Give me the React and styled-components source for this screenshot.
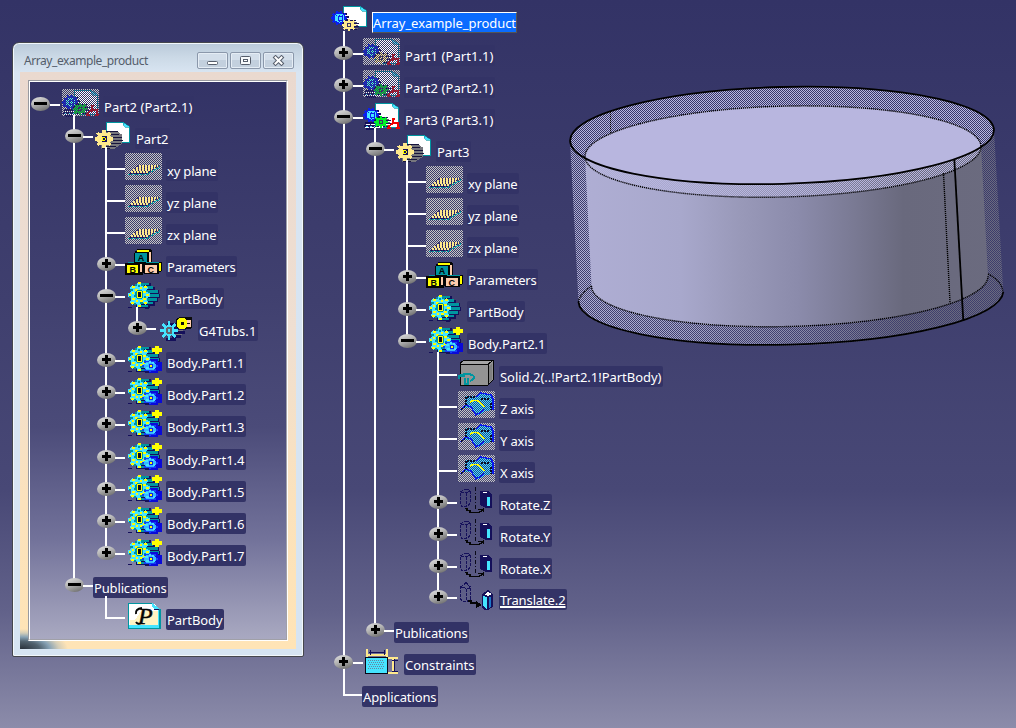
import React from 'react';
import styled, { createGlobalStyle, css } from 'styled-components';

const GlobalStyle = createGlobalStyle`
  html, body { margin: 0; padding: 0; }
  body { width: 1016px; height: 728px; overflow: hidden; }
`;

const FONT = '"Noto Sans", "Open Sans", sans-serif';
const NAVY = '#15105a';
const TEAL = '#0095a0';
const CYAN = '#45e4ff';
const YELLOW = '#ffff00';
const CREAM = '#ffe98c';

const measurer = document.createElement('canvas').getContext('2d');

/* letter spacing that makes a text take the given width */
function trackingFor(text, size, width) {
  measurer.font = `${size}px ${FONT}`;
  return (width - measurer.measureText(text).width) / text.length;
}

/* ---------- page ---------- */

const Desktop = styled.main`
  width: 1016px;
  height: 728px;
  display: flex;
  align-items: flex-start;
  overflow: hidden;
  font-family: ${FONT};
  background: linear-gradient(#333366 0, #3f3f6e 300px, #484876 490px, #62628a 612px, #8c8caa 728px);
`;

/* ---------- floating window ---------- */

const WindowFrame = styled.section`
  box-sizing: border-box;
  flex: none;
  width: 292px;
  height: 615px;
  margin: 42px 27px 0 12px;
  padding: 0 6px 6px;
  border: 1px solid #45474d;
  border-radius: 7px 7px 2px 2px;
  box-shadow: inset 0 0 0 1px #f2f7fb;
  background: linear-gradient(#b9c9d9 0, #cbd9e6 14px, #d9e5f2 30px, #d6e4f2 100%);
`;

const TitleBar = styled.header`
  display: flex;
  align-items: flex-start;
  height: 29px;
  padding: 0 1px 0 5px;
  box-sizing: border-box;
`;

const Title = styled.h1`
  flex: 1;
  margin: 9px 0 0;
  font-size: 12px;
  font-weight: 400;
  line-height: 18px;
  letter-spacing: ${(p) => p.$tracking}px;
  white-space: nowrap;
  color: #545d6b;
`;

const WindowButton = styled.button`
  box-sizing: border-box;
  width: 31px;
  height: 17px;
  margin: 9px 2px 0 0;
  padding: 0;
  border: 1px solid #8b98ab;
  border-radius: 2px;
  box-shadow: inset 0 0 0 1px #e5edf5;
  background: linear-gradient(#d3deea 0 50%, #c3d0de 50% 100%);
  svg { display: block; margin: 0 auto; }
`;

const Client = styled.div`
  box-sizing: border-box;
  width: 276px;
  height: 577px;
  margin-left: 1px;
  padding: 8px;
  background:
    radial-gradient(ellipse 46px 20px at 2px 100%, #2a323c 0, #51626f 38%, #87a2b5 60%, #d3cdb8 80%, transparent 100%),
    linear-gradient(#ead9cf 0, #efdfd2 45%, #fbe2bc 75%, #ffe4b6 100%);
`;

const Sunken = styled.div`
  box-sizing: border-box;
  width: 260px;
  height: 561px;
  border: 1px solid;
  border-color: #989aa0 #fff #fff #989aa0;
`;

const Pane = styled.div`
  box-sizing: border-box;
  width: 258px;
  height: 559px;
  padding: 6px 0 0 1px;
  border: 1px solid;
  border-color: #fff #a0a0a8 #a0a0a8 #fff;
  background: linear-gradient(#333366 0, #40406f 38%, #4b4b79 62%, #72729a 82%, #a9a9c1 100%);
`;

/* ---------- tree ---------- */

const ProductTree = styled.div`
  flex: none;
  width: 235px;
  box-sizing: border-box;
  padding: 4px 0 0 3px;
`;

const Row = styled.div`
  position: relative;
  display: flex;
  height: ${(p) => p.$height}px;
`;

const Guide = styled.span`
  flex: none;
  width: ${(p) => p.$width}px;
  ${(p) => p.$on && css`background: linear-gradient(#fff, #fff) 9px 0 / 2px 100% no-repeat;`}
`;

const Joint = styled.span`
  flex: none;
  width: 19px;
  padding: 9px 0 0 ${(p) => (p.$nested ? 1 : 0)}px;
  box-sizing: border-box;
  background: linear-gradient(#fff, #fff) 9px 0 / 2px ${(p) => (p.$line === 'end' ? '18px' : '100%')} no-repeat;
  ${(p) => p.$line === 'none' && css`background: none;`}
  svg { display: block; }
`;

const Stub = styled.span`
  flex: none;
  width: ${(p) => p.$width}px;
  height: 2px;
  margin-top: 16px;
  background: #fff;
  ${(p) => p.$long && css`margin-left: -9px; padding-left: 9px;`}
`;

const IconBox = styled.span`
  flex: none;
  width: 37px;
  height: 28px;
  margin: 1px 4px 0 ${(p) => p.$gap || 0}px;
  svg { display: block; overflow: visible; }
`;

const Label = styled.span`
  flex: none;
  box-sizing: border-box;
  height: 21px;
  width: ${(p) => p.$width}px;
  margin-top: 8px;
  padding-left: 1px;
  border-radius: 2px;
  font-size: 13px;
  line-height: 23px;
  letter-spacing: ${(p) => p.$tracking}px;
  white-space: nowrap;
  color: #fff;
  background: #333366;
  ${(p) => p.$bare && css`margin-left: -1px;`}
  ${(p) => p.$underlined && css`
    line-height: 22px;
    text-decoration: underline;
    text-decoration-thickness: 2px;
    text-underline-offset: 1px;
  `}
  ${(p) => p.$selected && css`
    border: 1px solid;
    border-color: #fff #555 #555 #fff;
    border-radius: 0;
    line-height: 21px;
    padding-left: 0;
    background: #0a6bff;
  `}
`;

const RootRow = styled(Row)`
  margin-left: -3px;
`;

/* start of a child line, drawn over the parent's icon or label */
const Drop = styled.i`
  position: absolute;
  left: ${(p) => p.$x}px;
  top: 27px;
  bottom: 0;
  width: 2px;
  background: #fff;
`;

/* ---------- icons ---------- */

const Dithered = styled.svg`
  mask-image: repeating-conic-gradient(#000 0 25%, transparent 0 50%);
  mask-size: 2px 2px;
`;

function gearPath(cx, cy, rx, ry, teeth = 8, depth = 0.78) {
  const pts = [];
  for (let i = 0; i < teeth; i += 1) {
    [-0.32, -0.2, 0.2, 0.32].forEach((o, k) => {
      const a = ((i + o) / teeth) * Math.PI * 2;
      const f = k === 0 || k === 3 ? depth : 1;
      pts.push(`${(cx + rx * f * Math.cos(a)).toFixed(1)},${(cy + ry * f * Math.sin(a)).toFixed(1)}`);
    });
  }
  return `M${pts.join('L')}Z`;
}

const Crisp = ({ as: Tag = 'svg', children }) => (
  <Tag width="37" height="28" viewBox="0 0 37 28" shapeRendering="crispEdges">{children}</Tag>
);

const Page = ({ h = 21 }) => (
  <g>
    <path d={`M12 1h17l7 5v${h - 5}h-24z`} fill="#fff" />
    <path d={`M12.5 ${h}V1.5H29M35.5 6V${h + 0.5}H20`} fill="none" stroke={TEAL} strokeWidth="1.4" />
    <path d="M29 1l7 5h-5l-2-2z" fill={CYAN} stroke={TEAL} strokeWidth=".6" />
  </g>
);

const BlueGear = () => (
  <g>
    <path d="M8 8.500h8M10 11.500h8M10 14.500h8M8 17.500h8" stroke={NAVY} strokeWidth="2" />
    <path d={gearPath(8, 13, 8, 7, 10, 0.85)} fill="#0a1ff0" />
    <ellipse cx="8.500" cy="13" rx="5" ry="4.500" fill={CYAN} />
    <path d="M5 10h7M5 16h7" stroke="#0a1ff0" strokeDasharray="1 2" />
    <path d="M7 11h4v4H7z" fill="none" stroke="#0a1ff0" />
  </g>
);

const SideGear = ({ fill }) => (
  <g>
    <path d="M18 15.500h7M20 18.500h8M20 21.500h8M20 24.500h6" stroke={NAVY} strokeWidth="1.6" />
    <path d="M20 17h6M21 20h6M20 23h7" stroke="#666" strokeWidth="1" />
    <path d={gearPath(18, 20, 7, 6, 8, 0.75)} fill={fill} />
    <rect x="16" y="18" width="4" height="4" fill="#3a3466" />
    <rect x="17" y="19" width="2" height="2" fill={fill} />
  </g>
);

const Instance = ({ second, base }) => (
  <g>
    <Page h={25} />
    <BlueGear />
    {base && (
      <g>
        <path d="M2 21h10M1 24h15M3 27h10" stroke={NAVY} strokeWidth="2" />
        <path d="M3 22.5h9M2 25.5h11" stroke="#fff" strokeWidth="1.6" strokeDasharray="4 1" />
        <path d="M3 24h9" stroke={CYAN} strokeDasharray="2 2" />
      </g>
    )}
    <SideGear fill={second} />
    <path d="M30 17v4l-5 4M30 21h5v5M24 26h4M33 26h4M29 17h3" fill="none" stroke="#f20000" strokeWidth="2" />
  </g>
);

const Gear3D = () => (
  <g>
    <path d="M12 3.500h14M16 7.500h14M17 11h17M17 15h18M17 19h16M15 23h15M11 25.500h14" stroke={NAVY} strokeWidth="3.600" />
    <path d="M12 3h12M15 6.500h13M17 10.500h16M17 14.500h17M17 18.500h15M15 22h13M12 25h11" stroke={TEAL} strokeWidth="2.400" />
    <g transform="translate(1 0)">
      <ellipse cx="13" cy="14" rx="9" ry="10" fill={CYAN} />
      <path d={gearPath(13, 14, 11.5, 12.5, 8, 0.76)} fill={CYAN} />
      <path d="M12 2h3M6 6h3M18 6h3M9 9h3M6 12h2M17 11h3M3 14h2M20 14h3M6 18h3M17 18h3M10 20h2M5 22h3M18 22h3M12 25h3M14 7h2M14 20h3" stroke={YELLOW} strokeWidth="2" />
      <path d="M15 4h3M4 9h3M9 4h2M20 10h3M3 16h2M14 22h3M8 23h2M21 18h2M8 15h2M18 16h2M12 5h2" stroke={TEAL} strokeWidth="2" />
      <path d="M11 9h4l2 2v5l-2 2h-4l-2-2v-5z" fill={TEAL} />
      <path d="M11 10h4l1 1v5l-1 1h-4z" fill={YELLOW} />
      <rect x="12" y="11" width="3" height="5" fill="#0a0a20" />
    </g>
    <path d="M3 26.500h4M20 27h4" stroke={NAVY} strokeWidth="1.500" />
  </g>
);

const Glyph = styled.text`
  font: bold 9px "Liberation Sans", sans-serif;
  fill: #050505;
`;

const Script = styled.text`
  font: italic 24px "Liberation Serif", serif;
  fill: #050505;
  stroke: #050505;
  stroke-width: 0.5px;
`;

const icons = {
  root: () => <Crisp><Page /><BlueGear /><SideGear fill={CREAM} /></Crisp>,
  part1: () => <Crisp as={Dithered}><path d="M0 0h37v27H0z" fill="#c4c4c4" /><Instance second={CREAM} /></Crisp>,
  part2: () => <Crisp as={Dithered}><path d="M0 0h37v27H0z" fill="#c4c4c4" /><Instance second="#00f028" base /></Crisp>,
  part3: () => <Crisp><Instance second="#00f028" base /></Crisp>,
  part: () => (
    <Crisp>
      <Page />
      <path d="M8 9.500h13l7 4v9l-7 5H7z" fill="#77777d" />
      <path d="M10 10.500h14M13 13.500h12M15 16.500h13M15 19.500h14M15 22.500h12M11 25.500h11M8 27.500h8" stroke="#17143c" strokeWidth="1.7" />
      <path d={gearPath(10, 18, 9.5, 9, 8, 0.76)} fill={CREAM} />
      <path d="M8 15h4l1 1v4l-1 1H8z" fill={NAVY} />
      <path d="M8 16h3l1 2-1 2H8z" fill={YELLOW} />
      <rect x="9" y="17" width="2" height="2" fill={NAVY} />
    </Crisp>
  ),
  plane: () => (
    <Crisp>
      <foreignObject width="37" height="28">
        <Crisp as={Dithered}>
          <path d="M0 0h37v27H0z" fill="#c6c6c4" />
        </Crisp>
      </foreignObject>
      <path d="M12 12h23l-12 9H3z" fill={NAVY} fillOpacity=".7" />
      <path d="M14 13h19M11 15h19M8 17h19M6 19h18" stroke={CREAM} strokeWidth="2" strokeDasharray="2 1" />
      <path d="M3 21.500h19l13-7.500" fill="none" stroke={TEAL} strokeWidth="1.500" strokeDasharray="2 1" />
      <path d="M5 20.500h18" stroke={NAVY} strokeDasharray="2 1" />
    </Crisp>
  ),
  parameters: () => (
    <Crisp>
      <path d="M12 0h14v1h1v12h10v9h-1v1h-2v2H19v-1h-1v2H0V14h3v-1h6V4h1V2h2z" fill="#050505" />
      <path d="M12 1h12v2H12z" fill={YELLOW} />
      <path d="M10 4h12v9H10z" fill={TEAL} />
      <path d="M24 3h2v10h-2z" fill="#ffccad" />
      <path d="M3 13h6v1H3zM21 13h13v1H21z" fill={TEAL} />
      <path d="M2 16h11v8H2z" fill={YELLOW} />
      <path d="M15 15h2v8h-2z" fill="#ffccad" />
      <path d="M20 16h12v8H20z" fill="#ffccad" />
      <path d="M34 14h2v8h-2z" fill={YELLOW} />
      <Glyph x="12.800" y="12">A</Glyph>
      <Glyph x="4.500" y="23.500">B</Glyph>
      <Glyph x="22.500" y="23.500">C</Glyph>
    </Crisp>
  ),
  gear: () => <Crisp><Gear3D /></Crisp>,
  body: () => (
    <Crisp>
      <Gear3D />
      <path d="M30 1h4v2h3v4h-3v2h-4V7h-3V3h3z" fill={YELLOW} />
      <path d="M25 15.500h8M28 18.500h9M28 21.500h9M28 24.500h9M24 27h9" stroke="#0a0ad8" strokeWidth="2.200" />
      <path d={gearPath(25, 21, 8, 6.5)} fill="#1540f4" />
      <ellipse cx="25" cy="21" rx="6" ry="4.500" fill="#37b8ff" />
      <path d="M20 19h3M21 23h3M27 18h2M28 23h2M24 17h2" stroke={CYAN} strokeWidth="2" />
      <path d="M24 19h4v4h-4z" fill="#1023e8" />
      <rect x="25" y="20" width="2" height="2" fill={YELLOW} />
    </Crisp>
  ),
  tubs: () => (
    <Crisp>
      <path d="M10 11.500h10M15 15.500h14M16 19.500h12M15 23.500h9M9 26.500h10" stroke={NAVY} strokeWidth="2.400" />
      <path d="M16 11.500h5M18 17.500h8M18 21.500h7" stroke="#75757d" strokeWidth="1.800" />
      <path d={gearPath(12, 17.5, 9, 9.5, 8, 0.6)} fill={CYAN} />
      <path d="M10 14h4l1 1v5l-1 1h-4l-1-1v-5z" fill="#65656d" />
      <rect x="11" y="16" width="2" height="3" fill={CYAN} />
      <path d="M23 4h11l1 1v10l-2 1h-9l-5-2V6z" fill="#0c0c0c" />
      <path d="M30 7h4v7h-4z" fill="#ffccad" />
      <path d="M22 5h6l2 3v5l-2 3h-6l-2-3V8z" fill={YELLOW} />
      <path d="M24 9h3v3h-3z" fill="#0c0c0c" />
      <path d="M30 10.500h3" stroke="#0c0c0c" />
    </Crisp>
  ),
  publication: () => (
    <Crisp>
      <path d="M4 2h25l5 5v18H4z" fill="#fff" />
      <path d="M16 9h17v14H5v-5h5z" fill="#fff0b4" fillOpacity=".8" />
      <path d="M4 24.500h30V8" fill="none" stroke={CYAN} strokeWidth="3" />
      <path d="M3.500 26V1.500h24M3 26.500h32V7" fill="none" stroke={TEAL} strokeWidth="1.200" />
      <path d="M27 1l8 6h-6l-2-3z" fill={CYAN} />
      <path d="M29 7.500h5" stroke={NAVY} strokeWidth="1.500" />
      <Script x="13" y="22">P</Script>
      <path d="M11 12q-1-5 6-6M11 20q2 3 5 1" fill="none" stroke="#050505" strokeWidth="2" shapeRendering="auto" />
    </Crisp>
  ),
  solid: () => (
    <Crisp>
      <path d="M2 4l5-3h28v20l-5 5H2z" fill="#949494" stroke="#050505" strokeWidth="1" />
      <path d="M3 4l4-2.500h27L30 5H3z" fill="#a5a5a5" />
      <path d="M2.500 5.500h27.500l4.500-4M30.500 5.500v20" fill="none" stroke="#050505" strokeWidth="1" />
      <path d="M31 7l3-3v16l-3 4z" fill="#808080" />
      <path d="M1 20v-3q3-2 9-2 7 1 6 4-1 2-4 3M1 17h6M7 19v6h3v-6" fill="none" stroke={TEAL} strokeWidth="2" />
    </Crisp>
  ),
  axis: () => (
    <Crisp>
      <foreignObject width="37" height="28">
        <Crisp as={Dithered}><path d="M0 0h37v27H0z" fill="#c6c6c4" /></Crisp>
      </foreignObject>
      <path d="M8 5h11l7-3 8 3v14l-6 1-8 5-6-8-8 0z" fill="#243f8c" />
      <foreignObject width="37" height="28">
        <Crisp as={Dithered}><path d="M8 5h11l7-3 8 3v14l-6 1-8 5-6-8-8 0z" fill={CYAN} /></Crisp>
      </foreignObject>
      <path d="M2 19l6-5 5 2 5 8 8-5M18 6l5-4 10 2 2 4v11" fill="none" stroke="#0a18ee" strokeWidth="1.400" />
      <path d="M8 14V6h9M23 8h9M33 12v7M3 18l4-2" fill="none" stroke="#0b0b22" strokeWidth="1.600" strokeDasharray="2 1" />
      <path d="M12 11q8-5 14 5" fill="none" stroke={YELLOW} strokeWidth="1.500" />
    </Crisp>
  ),
  rotate: () => (
    <Crisp>
      <path d="M2.500 5l4-3h3l3 2v12l-3 3h-6l-1-2zM2.500 5.500h6l4-1.500M8.500 6v13" fill="none" stroke={NAVY} strokeDasharray="3 1" />
      <path d="M17.500 0v22" stroke="#0a0a18" strokeDasharray="4 2 1 2" />
      <path d="M22 4h8l4 3v14h-6l-6-3z" fill={NAVY} />
      <path d="M23 4.500h5l2 1.500h-4z" fill="#fff" />
      <path d="M29 10h3v9h-3z" fill={CYAN} />
      <path d="M7 21.500h2v2h3v2h9l3-2 2-2M20 22.500h6M25.500 21v4" fill="none" stroke="#050505" strokeWidth="1.500" />
    </Crisp>
  ),
  translate: () => (
    <Crisp>
      <path d="M2.500 5l4-3 2-2 1 3 3 2v12l-3 2h-5l-2-2zM2.500 5.500h4l2 2 4-2M8.500 7v12" fill="none" stroke={NAVY} strokeDasharray="3 1" />
      <path d="M10 19h3v2h6v2h3M18 20l4 3-4 2" fill="none" stroke="#050505" strokeWidth="1.800" />
      <path d="M24 12l6-4 5 4v13l-5 3h-4l-2-3z" fill={NAVY} />
      <path d="M25 14l4 1v12l-4-3z" fill={CYAN} />
      <path d="M31 15h2v9l-2 2z" fill="#1c78c8" />
      <path d="M26 12l3-1 1-2 1 2 3 1-4 2z" fill="#fff" />
    </Crisp>
  ),
  constraints: () => (
    <Crisp>
      <path d="M2 10h23v17H2z" fill="#080816" />
      <path d="M3 11h21v15H3z" fill={CYAN} />
      <path d="M5 13.500h16M6 15.500h16M5 17.500h16M6 19.500h16M5 21.500h16" stroke="#6a7f9c" strokeDasharray="1 1" />
      <path d="M4 2v8M24 2v8M25 11h10M25 26h10M4 7.500h20M29.500 11v15" fill="none" stroke={CREAM} strokeWidth="2" />
      <path d="M6 5.500h16M7.500 3v5M21.500 3v5M31.500 12v13M29 13.500h6M29 24.500h6" fill="none" stroke={NAVY} strokeWidth="1.600" />
    </Crisp>
  ),
};

function Toggle({ open }) {
  return (
    <svg width="19" height="15" viewBox="0 0 19 15" overflow="visible">
      <defs>
        <linearGradient id="knob" x1="0.2" y1="0" x2="0.7" y2="1">
          <stop offset="0" stopColor="#dcdcdc" />
          <stop offset="0.45" stopColor="#b2b2b2" />
          <stop offset="1" stopColor="#707070" />
        </linearGradient>
      </defs>
      <ellipse cx="9.500" cy="7" rx="9.500" ry="7" fill="url(#knob)" />
      {open ? (
        <rect x="3" y="5" width="13" height="3" fill="#000" />
      ) : (
        <path d="M5 5h9v3H5zM8 2h3v9H8z" fill="#000" />
      )}
    </svg>
  );
}

/* ---------- tree data ---------- */

const plane = (name) => ({ level: 2, text: name, w: 52, icon: 'plane', guides: [1] });

const windowRows = [
  { level: 0, text: 'Part2 (Part2.1)', w: 91, icon: 'part2', toggle: 'open', line: 'none', drop: true },
  { level: 1, text: 'Part2', w: 35, icon: 'part', toggle: 'open', drop: true },
  plane('xy plane'),
  plane('yz plane'),
  plane('zx plane'),
  { level: 2, text: 'Parameters', w: 71, icon: 'parameters', toggle: 'shut', guides: [1] },
  { level: 2, text: 'PartBody', w: 58, icon: 'gear', toggle: 'open', guides: [1], drop: true },
  { level: 3, text: 'G4Tubs.1', w: 60, icon: 'tubs', toggle: 'shut', guides: [1, 2], line: 'end' },
  ...[1, 2, 3, 4, 5, 6, 7].map((n) => ({
    level: 2, text: `Body.Part1.${n}`, w: 80, icon: 'body', toggle: 'shut', guides: [1],
    height: n === 3 ? 33 : 32, line: n === 7 ? 'end' : undefined,
  })),
  { level: 1, text: 'Publications', w: 75, toggle: 'open', line: 'end', drop: true },
  { level: 2, text: 'PartBody', w: 58, icon: 'publication', line: 'end' },
];

const inner = [0, 1];
const productRows = [
  { level: 0, text: 'Part1 (Part1.1)', w: 91, icon: 'part1', toggle: 'shut' },
  { level: 0, text: 'Part2 (Part2.1)', w: 91, icon: 'part2', toggle: 'shut' },
  { level: 0, text: 'Part3 (Part3.1)', w: 91, icon: 'part3', toggle: 'open', drop: true },
  { level: 1, text: 'Part3', w: 35, icon: 'part', toggle: 'open', guides: [0], drop: true },
  { ...plane('xy plane'), guides: inner },
  { ...plane('yz plane'), guides: inner },
  { ...plane('zx plane'), guides: inner },
  { level: 2, text: 'Parameters', w: 71, icon: 'parameters', toggle: 'shut', guides: inner },
  { level: 2, text: 'PartBody', w: 58, icon: 'gear', toggle: 'shut', guides: inner },
  { level: 2, text: 'Body.Part2.1', w: 80, icon: 'body', toggle: 'open', guides: inner, line: 'end', height: 33, drop: true },
  { level: 3, text: 'Solid.2(..!Part2.1!PartBody)', w: 164, icon: 'solid', guides: inner },
  { level: 3, text: 'Z axis', w: 36, icon: 'axis', guides: inner },
  { level: 3, text: 'Y axis', w: 36, icon: 'axis', guides: inner },
  { level: 3, text: 'X axis', w: 36, icon: 'axis', guides: inner },
  { level: 3, text: 'Rotate.Z', w: 53, icon: 'rotate', toggle: 'shut', guides: inner },
  { level: 3, text: 'Rotate.Y', w: 53, icon: 'rotate', toggle: 'shut', guides: inner },
  { level: 3, text: 'Rotate.X', w: 53, icon: 'rotate', toggle: 'shut', guides: inner, height: 31 },
  { level: 3, text: 'Translate.2', w: 68, icon: 'translate', toggle: 'shut', guides: inner, line: 'end', height: 33, underlined: true },
  { level: 1, text: 'Publications', w: 75, toggle: 'shut', guides: [0], line: 'end' },
  { level: 0, text: 'Constraints', w: 72, icon: 'constraints', toggle: 'shut' },
  { level: 0, text: 'Applications', w: 76, line: 'end' },
];

function TreeRow({ item, steps, firstGap }) {
  const Icon = item.icon && icons[item.icon];
  const iconGap = item.level === 0 && firstGap ? firstGap : item.level % 2;
  const offset = steps.slice(0, item.level + 1).reduce((a, b) => a + b, 0);
  return (
    <Row $height={item.height || 32}>
      {steps.slice(0, item.level).map((width, i) => (
        <Guide key={i} $width={width} $on={(item.guides || []).includes(i)} />
      ))}
      <Joint $line={item.line} $nested={item.level > 0}>
        {item.toggle && <Toggle open={item.toggle === 'open'} />}
      </Joint>
      <Stub $width={10} $long={!item.toggle} />
      {Icon && <IconBox $gap={iconGap}><Icon /></IconBox>}
      <Label
        $width={item.w}
        $tracking={trackingFor(item.text, 13, item.w - 2.5)}
        $underlined={item.underlined}
        $bare={!item.icon && !item.toggle}
      >
        {item.text}
      </Label>
      {item.drop && <Drop $x={offset + 9} />}
    </Row>
  );
}

function FloatingWindow() {
  const title = 'Array_example_product';
  return (
    <WindowFrame>
      <TitleBar>
        <Title $tracking={trackingFor(title, 12, 124)}>{title}</Title>
        <WindowButton aria-label="Minimize">
          <svg width="13" height="11"><rect x="1.500" y="6.500" width="10" height="3" rx="1" fill="#fff" stroke="#555d6b" /></svg>
        </WindowButton>
        <WindowButton aria-label="Maximize">
          <svg width="13" height="11">
            <rect x="1.500" y="1.500" width="10" height="8" rx="1" fill="#f7f9fb" stroke="#555d6b" />
            <rect x="4.500" y="4.500" width="4" height="2" fill="#fff" stroke="#555d6b" />
          </svg>
        </WindowButton>
        <WindowButton aria-label="Close">
          <svg width="13" height="11">
            <path d="M3.500 2.500l6 6M9.500 2.500l-6 6" stroke="#555d6b" strokeWidth="4" strokeLinecap="square" />
            <path d="M3.500 2.500l6 6M9.500 2.500l-6 6" stroke="#fff" strokeWidth="2" strokeLinecap="square" />
          </svg>
        </WindowButton>
      </TitleBar>
      <Client>
        <Sunken>
          <Pane>
            {windowRows.map((item, i) => (
              <TreeRow key={i} item={item} steps={[33, 32, 31]} firstGap={2} />
            ))}
          </Pane>
        </Sunken>
      </Client>
    </WindowFrame>
  );
}

/* ---------- model view ---------- */

const ModelView = styled.svg`
  flex: none;
  display: block;
  width: 450px;
  height: 275px;
  margin-top: 80px;
`;

function Cylinder() {
  const outerSide = 'M570 141A212 48.400 -1.500 0 0 994 130L1003.300 292A212 48.400 -1.500 0 1 578.500 302Z';
  const innerSide = 'M585 156A198 45.400 -1.500 0 0 981 146L988 276A198 45.400 -1.500 0 1 591.500 286Z';
  const dotted = { fill: 'none', stroke: '#000', strokeWidth: 1.4, strokeDasharray: '1.2 0.8' };
  return (
    <ModelView viewBox="566 80 450 275">
      <defs>
        <linearGradient id="wall" gradientUnits="userSpaceOnUse" x1="580" y1="0" x2="1000" y2="0">
          <stop offset="0" stopColor="#afaed4" />
          <stop offset="0.24" stopColor="#a8a8cc" />
          <stop offset="0.38" stopColor="#9999b9" />
          <stop offset="0.52" stopColor="#8b8bab" />
          <stop offset="0.65" stopColor="#7a7a94" />
          <stop offset="0.77" stopColor="#69697d" />
          <stop offset="1" stopColor="#6b6b7f" />
        </linearGradient>
        <pattern id="checks" width="2" height="2" patternUnits="userSpaceOnUse">
          <path d="M1 0h1v1H1zM0 1h1v1H0z" fill="#fff" shapeRendering="crispEdges" />
        </pattern>
        <mask id="screen" maskUnits="userSpaceOnUse" x="566" y="80" width="450" height="275">
          <rect x="566" y="80" width="450" height="275" fill="url(#checks)" />
        </mask>
        <clipPath id="rim">
          <ellipse cx="782" cy="135.400" rx="212" ry="48.400" transform="rotate(-1.500 782 135.400)" />
        </clipPath>
      </defs>
      <g mask="url(#screen)">
        <path d={outerSide} fill="url(#wall)" />
        <ellipse cx="782" cy="135.400" rx="212" ry="48.400" transform="rotate(-1.500 782 135.400)" fill="#b9b7e0" />
      </g>
      <path d={innerSide} fill="url(#wall)" />
      <ellipse cx="783" cy="151.600" rx="198" ry="45.400" transform="rotate(-1.500 783 151.600)" fill="#b8b6df" />
      <g mask="url(#screen)">
        <ellipse cx="783" cy="151.600" rx="198" ry="45.400" transform="rotate(-1.500 783 151.600)" fill="url(#wall)" />
      </g>
      <g clipPath="url(#rim)">
        <ellipse cx="783" cy="151.600" rx="198" ry="45.400" transform="rotate(-1.500 783 151.600)" fill="#b8b6df" />
      </g>
      <g {...dotted}>
        <ellipse cx="783" cy="151.600" rx="198" ry="45.400" transform="rotate(-1.500 783 151.600)" />
        <path d="M591.500 286A198 45.400 -1.500 0 0 988 276" />
        <path d="M578.500 302Q579 295 591.500 286M988 274Q1002 281 1003 292" />
        <path d="M943.500 173L950 303" />
        <path d="M610.500 112V133" strokeWidth="1" />
      </g>
      <g fill="none" stroke="#000" strokeWidth="1.800">
        <ellipse cx="782" cy="135.400" rx="212" ry="48.400" transform="rotate(-1.500 782 135.400)" />
        <path d="M578.500 302A212.500 48.400 -1.500 0 0 1003.300 292" />
        <path d="M954.300 159L963.300 321" />
      </g>
    </ModelView>
  );
}

export default function App() {
  const root = 'Array_example_product';
  return (
    <Desktop>
      <GlobalStyle />
      <FloatingWindow />
      <ProductTree>
        <RootRow $height={33}>
          <IconBox>{icons.root()}</IconBox>
          <Label $selected $width={145} $tracking={trackingFor(root, 13, 143)}>{root}</Label>
          <Drop $x={12} />
        </RootRow>
        {productRows.map((item, i) => (
          <TreeRow key={i} item={item} steps={[31, 32, 31]} />
        ))}
      </ProductTree>
      <Cylinder />
    </Desktop>
  );
}
